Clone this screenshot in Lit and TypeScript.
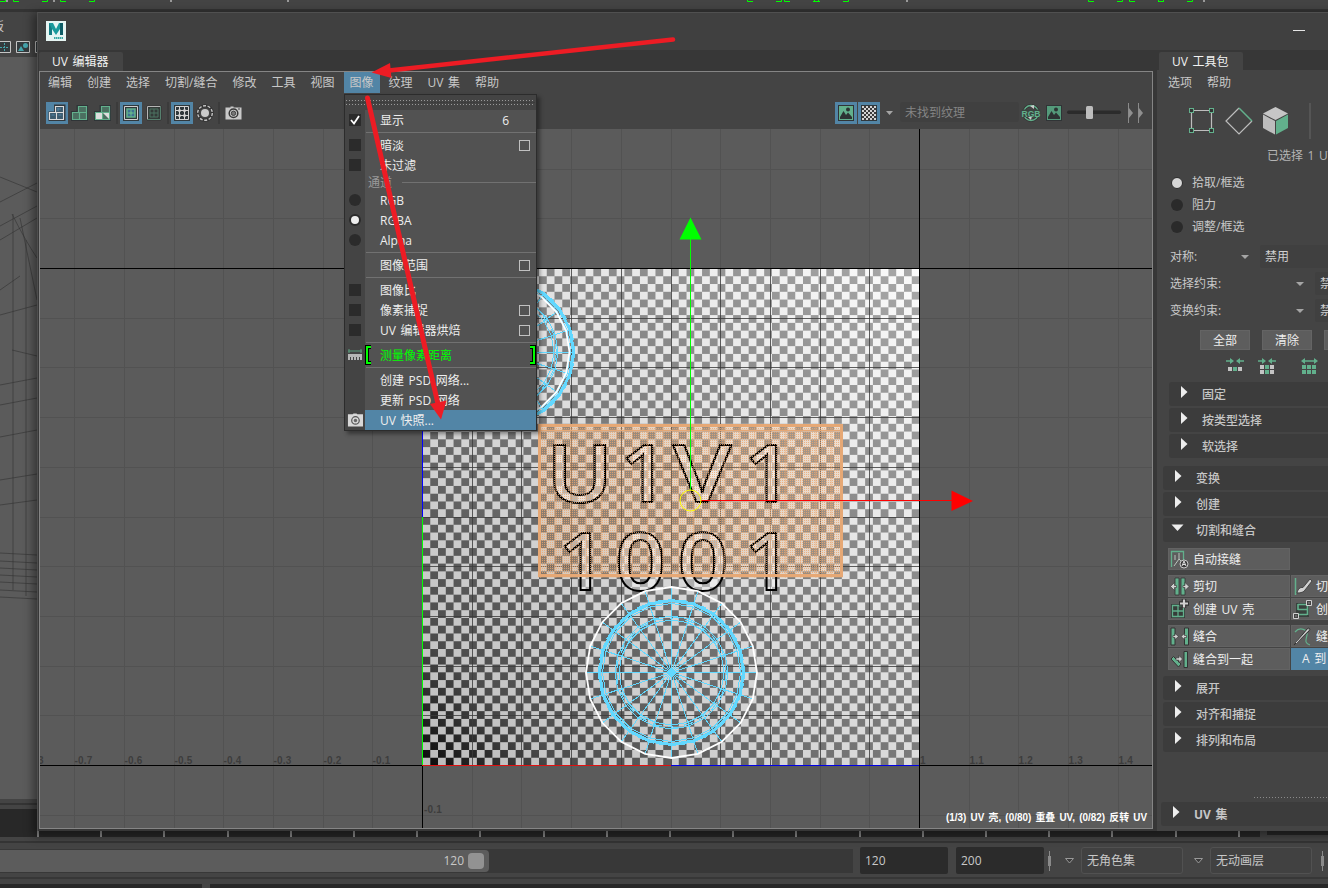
import { LitElement, html, svg, css, nothing } from "lit";
import { customElement } from "lit/decorators.js";
import { classMap } from "lit/directives/class-map.js";

const GREEN = "#62b08c";
const LIGHT = "#bdbdbd";

const polar = (cx: number, cy: number, r: number, i: number, n = 20) => {
  const a = (i / n) * Math.PI * 2;
  return [cx + r * Math.cos(a), cy + r * Math.sin(a)];
};
const ring = (cx: number, cy: number, r: number, n = 20) =>
  Array.from({ length: n }, (_, i) => polar(cx, cy, r, i, n).map((v) => v.toFixed(1)).join(",")).join(" ");

/** The 2D texture-space view: grid, checker texture, shells and manipulator. */
@customElement("uv-canvas")
export class UvCanvas extends LitElement {
  static styles = css`
    :host { display: block; width: 1112px; height: 699px; background: #5b5b5b; overflow: hidden; }
    svg { display: block; }
    .axis { font: bold 10px "Liberation Sans", Arial, sans-serif; fill: #3d3d3d; letter-spacing: 0.2px; }
    .status { font: bold 10px "Liberation Sans", "Noto Sans CJK SC", sans-serif; fill: #fff; }
    .glyph { font: 600 80px "Open Sans", "Noto Sans", sans-serif; }
  `;

  private gridLines(from: number, to: number) {
    return Array.from({ length: to - from + 1 }, (_, k) => from + k);
  }

  private wheel(cx: number, cy: number, whiteR: number) {
    return svg`
      <g fill="none" stroke="#62d8ff" shape-rendering="crispEdges">
        ${Array.from({ length: 20 }, (_, i) => {
          const [x, y] = polar(cx, cy, Math.max(whiteR, 72), i);
          return svg`<line x1=${cx} y1=${cy} x2=${x} y2=${y}></line>`;
        })}
        <polygon points=${ring(cx, cy, 72)} stroke-width="3"></polygon>
        <polygon points=${ring(cx, cy, 69)}></polygon>
        <polygon points=${ring(cx, cy, 73, 40)} stroke-dasharray="6 5"></polygon>
        <polygon points=${ring(cx, cy, 56.5)}></polygon>
        <polygon points=${ring(cx, cy, 55, 17)} stroke-dasharray="9 7"></polygon>
        <polygon points=${ring(cx, cy, 52.5)}></polygon>
        <circle cx=${cx} cy=${cy} r="3" fill="#62d8ff"></circle>
      </g>
      <polygon points=${ring(cx, cy, whiteR)} fill="none" stroke="#fff" stroke-width="1.8"></polygon>`;
  }

  private glyphs() {
    const g: [string, number, number, number][] = [
      ["U", 554, 502, 52], ["1", 625, 502, 25], ["V", 673, 502, 58], ["1", 749, 502, 25],
      ["1", 563, 589.5, 25], ["0", 619, 589.5, 43], ["0", 681.5, 589.5, 43], ["1", 749, 589.5, 25],
    ];
    const ink: Record<string, [number, number]> = { U: [6.6, 46.5], "1": [4.3, 24.2], V: [0, 49.5], "0": [3.6, 38.6] };
    return g.map(([c, x, y, w]) => {
      const s = w / ink[c][1];
      return svg`<text class="glyph" transform=${`translate(${x - ink[c][0] * s} ${y}) scale(${s} 1)`}>${c}</text>`;
    });
  }

  render() {
    const gx = (i: number) => Math.round(422 + i * 49.7) + 0.5;
    const gy = (i: number) => Math.round(765 - i * 49.7) + 0.5;
    return html`<svg width="1112" height="699" viewBox="40 129 1112 699">
      <defs>
        <linearGradient id="lg" x1="0" y1="1" x2="1" y2="0">
          <stop offset="0" stop-color="#bcbcbc"></stop><stop offset="1" stop-color="#fbfbfb"></stop>
        </linearGradient>
        <linearGradient id="dg" x1="0" y1="1" x2="1" y2="0">
          <stop offset="0" stop-color="#0a0a0a"></stop><stop offset=".14" stop-color="#4c4c4c"></stop>
          <stop offset=".42" stop-color="#727272"></stop><stop offset="1" stop-color="#a8a8a8"></stop>
        </linearGradient>
        <pattern id="chk" width="15.53125" height="15.53125" patternUnits="userSpaceOnUse" x="422.5" y="268.5">
          <path d="M0 0H7.766V7.766H0zM7.766 7.766H15.54V15.54H7.766z" fill="#fff" shape-rendering="crispEdges"></path>
        </pattern>
        <mask id="cm"><rect x="422" y="268" width="498" height="498" fill="url(#chk)"></rect></mask>
        <pattern id="dots" width="2" height="2" patternUnits="userSpaceOnUse">
          <rect width="1" height="1" fill="#eaa872"></rect>
        </pattern>
        <pattern id="cols" width="15.3" height="8" patternUnits="userSpaceOnUse" x="540">
          <rect width="1" height="8" fill="#e6a875"></rect>
        </pattern>
      </defs>
      <g stroke="#525252" shape-rendering="crispEdges">
        ${this.gridLines(-7, 14).map((i) => svg`<line x1=${gx(i)} x2=${gx(i)} y1="129" y2="828"></line>`)}
        ${this.gridLines(-1, 12).map((i) => svg`<line y1=${gy(i)} y2=${gy(i)} x1="40" x2="1152"></line>`)}
      </g>
      <rect x="422" y="268" width="497" height="497" fill="url(#lg)"></rect>
      <rect x="422" y="268" width="497" height="497" fill="url(#dg)" mask="url(#cm)"></rect>
      <g stroke="#3c3c3c" stroke-opacity=".82" shape-rendering="crispEdges">
        ${this.gridLines(1, 9).map((i) => svg`<line x1=${gx(i)} x2=${gx(i)} y1="268" y2="765"></line>
          <line y1=${gy(i)} y2=${gy(i)} x1="422" x2="919"></line>`)}
      </g>
      <g stroke="#000" shape-rendering="crispEdges">
        <path d="M40 268.5H1152M40 765.5H1152M422.5 129V828M919.5 129V828"></path>
        <path d="M422.5 268V517" stroke="#00f"></path><path d="M422.5 517V765" stroke="#0f0"></path>
        <path d="M422 765.5H671" stroke="#e01010"></path><path d="M671 765.5H919" stroke="#0000e6"></path>
      </g>
      ${[-7, -6, -5, -4, -3, -2, -1].map((i) => svg`<text class="axis" x=${gx(i)} y="764">${(i / 10).toFixed(1)}</text>`)}
      <text class="axis" x="38" y="764">3</text>
      <text class="axis" x="920" y="764">1</text>
      ${[11, 12, 13, 14].map((i) => svg`<text class="axis" x=${gx(i)} y="764">${(i / 10).toFixed(1)}</text>`)}
      <text class="axis" x="424" y="813">-0.1</text>

      ${this.wheel(501.5, 352, 68)}
      <rect x="538" y="424" width="305" height="154" fill="#f3b27a" fill-opacity=".24"></rect>
      <g fill="#fff" fill-opacity=".42" stroke="#000" stroke-width="2">${this.glyphs()}</g>
      <rect x="538" y="424" width="305" height="154" fill="url(#dots)" fill-opacity=".8" shape-rendering="crispEdges"></rect>
      <rect x="538" y="424" width="305" height="154" fill="url(#cols)" fill-opacity=".5" shape-rendering="crispEdges"></rect>
      <path d="M539.5 425.5H841.5V575.5H539.5z" fill="none" stroke="#e6a875" stroke-width="3"></path>
      <path d="M538 430.5H843M538 576H843" stroke="#e6a875" stroke-width="1.4" fill="none"></path>
      ${this.wheel(671.5, 672.5, 85.5)}

      <g shape-rendering="crispEdges">
        <path d="M690.5 238V490" stroke="#0f0"></path>
        <path d="M701 500.5H952" stroke="#f00"></path>
      </g>
      <path d="M690.5 217.5L701.5 239.5H679.5z" fill="#0f0"></path>
      <path d="M973 501L951.5 490.5V511z" fill="#f00"></path>
      <circle cx="690.5" cy="500.5" r="10.5" fill="none" stroke="#ff0"></circle>
      <text class="status" x="946" y="821" textLength="201" lengthAdjust="spacingAndGlyphs">(1/3) UV 壳, (0/80) 重叠 UV, (0/82) 反转 UV</text>
    </svg>`;
  }
}

const icon = (body: unknown, w = 22, h = 22) =>
  html`<svg class="ico" width=${w} height=${h} viewBox="0 0 ${w} ${h}">${body}</svg>`;

const shells = (stroke: string, fill: string) => svg`
  <path d="M9 4.500h8.500v13h-14v-7H9z" fill="none" stroke="#2f3437" stroke-width="3"></path>
  <g fill=${fill} stroke=${stroke} stroke-width="1.200">
    <path d="M9.500 4.500h8v6h-8zM3.500 10.500h7v7h-7zM10.500 10.500h7v7h-7z"></path>
  </g>`;
const camera = svg`
  <path d="M3.500 5.500h5v-1h3v1h8v12h-16z" fill="#c9c9c9"></path><path d="M16 7h2" stroke="#444"></path>
  <circle cx="11.500" cy="11.300" r="4.300" fill="#c9c9c9" stroke="#383838" stroke-width="1.500"></circle>
  <circle cx="11.500" cy="11.300" r="2.200" fill="#777" stroke="#444"></circle>`;
const picture = (bg: string) => svg`
  <path d="M3 3h16v16H3z" fill="#303436"></path><path d="M4 4h14v14H4z" fill=${bg}></path>
  <path d="M5 17v-2l3.500-6 2.500 4 2-2.500 4 4.500v2z" fill="#2d3333"></path><circle cx="13" cy="7.500" r="2" fill="#2d3333"></circle>`;

const toolIcons = {
  wire: icon(svg`<path d="M8 2.500h11.500v16.500H2.500V9.500H8z" fill="#32393e"></path><g fill="#3d5b6e" stroke="#dcdcdc" stroke-width="1.100"><path d="M9.500 4.500h8v6h-8zM3.500 10.500h7v7h-7zM10.500 10.500h7v7h-7z"></path><path d="M12 7h3M12 6v3M5.500 13h3M12.500 13h3" stroke="#5285a6"></path></g>`),
  shade: icon(shells(GREEN, "#4b6f60")),
  distort: icon(svg`${shells(GREEN, "#4b6f60")}<path d="M4 11h6v6H4z" fill="#ddd"></path><path d="M11 11h6v6z" fill="#ddd"></path>`),
  border: icon(svg`<path d="M3 3h16v16H3z" fill="#30383c"></path><path d="M4.500 4.500h13v13h-13z" fill="none" stroke="#d0d0d0"></path><path d="M7 7h8v8H7z" fill="#3f7194" stroke=${GREEN} stroke-width="1.600"></path><path d="M11 7v8M7 11h8" stroke=${GREEN}></path><circle cx="11" cy="11" r="1.600" fill=${GREEN}></circle>`),
  texborder: icon(svg`<path d="M4 4h14v14H4z" fill="#343a38" stroke="#303030"></path><path d="M4.500 17.500v-13h13" stroke="#b5b5b5" fill="none"></path><path d="M4.500 17.500h13v-13" stroke="#56806e" fill="none"></path><path d="M7 7h8v8H7zM11 7v8M7 11h8" stroke="#4c7562" fill="none"></path>`),
  grid: icon(svg`<path d="M3 3h16v16H3z" fill="#30383c"></path><path d="M4.500 4.500h13v13h-13zM8.500 4v14M13.500 4v14M4 8.500h14M4 13.500h14" stroke="#d5d5d5" fill="none"></path>${[8.5, 13.5].map((x) => [8.5, 13.5].map((y) => svg`<circle cx=${x} cy=${y} r="1.500" fill="#d5d5d5"></circle>`))}`),
  iso: icon(svg`<circle cx="11" cy="11" r="7.300" fill="none" stroke="#333" stroke-width="3"></circle><circle cx="11" cy="11" r="7.300" fill="none" stroke="#c4c4c4" stroke-width="1.400" stroke-dasharray="3 1.600"></circle><circle cx="11" cy="11" r="4" fill="#cbcbcb"></circle>`),
  camera: icon(camera),
  image: icon(picture("#62b08c")),
  checker: icon(svg`<path d="M3 3h16v16H3z" fill="#30383c"></path><path d="M4 4h14v14H4z" fill="#d4d4d4"></path>${Array.from({ length: 49 }, (_, k) => (k % 2 ? svg`<rect x=${4 + (k % 7) * 2} y=${4 + Math.floor(k / 7) * 2} width="2" height="2" fill="#3b3b3b"></rect>` : nothing))}`),
  rgb: icon(svg`<circle cx="11" cy="11" r="7.500" fill="none" stroke="#333" stroke-width="3"></circle><circle cx="11" cy="11" r="7.500" fill="none" stroke=${GREEN} stroke-width="1.300"></circle><path d="M10 4l4-1v4zM11 18l-3-3 4-1z" fill="#ccc"></path><path d="M1.500 7.500h19v7.500h-19z" fill="#3a4441"></path><text x="1.500" y="14.500" textLength="19" lengthAdjust="spacingAndGlyphs" font-family="Liberation Sans" font-weight="bold" font-size="9" fill=${GREEN}>RGB</text>`),
  dim: icon(picture("#549a7a")),
};

const kitIcons: Record<string, unknown> = {
  auto: svg`<path d="M2.500 18V2.500h12V11M6 6v5M10 4v6l-5 7M10 10l3 3" fill="none" stroke="#b8c4bd"></path><path d="M2.500 18V2.500h12V11" fill="none" stroke=${GREEN} stroke-width="1.300"></path><circle cx="15" cy="15" r="4" fill="#3a3a3a" stroke="#c8c8c8"></circle><path d="M13 17l2-5 2 5M14 15.500h2" stroke="#ddd" fill="none"></path>`,
  cut: svg`<path d="M6 2h4v17H6zM12 2h4v17h-4z" fill=${GREEN} stroke="#333" stroke-width=".800"></path><path d="M1.500 10.500l4-4v3h2v2h-2v3zM20 10.500l-4-4v3h-2v2h2v3z" fill="#d0d0d0" stroke="#333" stroke-width=".600"></path>`,
  create: svg`<path d="M2 5h14v14H2z" fill="#363c39"></path><path d="M3.500 6.500h11v11h-11zM9 6v12M3 12h12" stroke=${GREEN} fill="none" stroke-width="1.300"></path><path d="M15 0v9M10 4.500h10" stroke="#333" stroke-width="4.500"></path><path d="M15 .500v8M11 4.500h8" stroke="#d0d0d0" stroke-width="2.200"></path>`,
  sew: svg`<path d="M2 2h4v17H2zM15.500 2h4v17h-4z" fill=${GREEN} stroke="#333"></path><path d="M9.500 10.500l-3.500-3v2H4v2h2v2zM12 10.500l3.500-3v2h2v2h-2v2z" fill="#d0d0d0" stroke="#333" stroke-width=".600"></path>`,
  move: svg`<path d="M15 2.500h3.500v16H15z" fill=${GREEN} stroke="#333"></path><path d="M2 10l2.500-2.500L12 15l-2.500 3z" fill=${GREEN} stroke="#333"></path><path d="M13.500 10l-3.500-3.500v2.300H7v2.400h3v2.300z" fill="#d0d0d0" stroke="#333" stroke-width=".600"></path>`,
  knife: svg`<path d="M3.500 2v17" stroke=${GREEN} stroke-width="1.500"></path><path d="M5 17c1-4 3-6 6-5.500L18 3l2 2-7 9c-1 2-4 3-8 3z" fill="#d0d0d0" stroke="#333" stroke-width=".800"></path>`,
  strip: svg`<path d="M4 4h13v14H4z" fill="#39413d"></path><path d="M6 5.500h10M6 10.500h10M5 15.500h10M6 5v6M15.500 5v11" stroke=${GREEN} stroke-width="1.600" fill="none"></path><path d="M14.500 1.500h5v5h-5zM1.500 14.500h5v5h-5z" fill="#444" stroke="#d0d0d0"></path><path d="M16.500 3.500h1v1h-1zM3.500 16.500h1v1h-1z" fill="#ddd"></path>`,
  needle: svg`<path d="M3 6c5-6 13-2 12 3s-3 8 3 10" stroke=${GREEN} fill="none" stroke-width="1.200"></path><path d="M2 19L15 3c2-2 4 0 2 2z" fill="#aaa" stroke="#333"></path><path d="M4 17L16 4" stroke="#ddd"></path>`,
};

interface MenuRow { t: string; kind?: string; mark?: string; opt?: boolean; key?: string; }
const MENU: MenuRow[] = [
  { t: "显示", mark: "check on", key: "6" }, { t: "", kind: "sep" },
  { t: "暗淡", mark: "check", opt: true }, { t: "未过滤", mark: "check" }, { t: "通道", kind: "head" },
  { t: "RGB", mark: "radio" }, { t: "RGBA", mark: "radio on" }, { t: "Alpha", mark: "radio" }, { t: "", kind: "sep" },
  { t: "图像范围", opt: true }, { t: "", kind: "sep" },
  { t: "图像比", mark: "check" }, { t: "像素捕捉", mark: "check", opt: true }, { t: "UV 编辑器烘焙", mark: "check", opt: true },
  { t: "", kind: "sep" }, { t: "测量像素距离", kind: "fresh", mark: "ruler" }, { t: "", kind: "sep" },
  { t: "创建 PSD 网络..." }, { t: "更新 PSD 网络" }, { t: "UV 快照...", kind: "hot", mark: "cam" },
];

@customElement("app-root")
export class AppRoot extends LitElement {
  static styles = css`
    :host { display: block; position: relative; width: 1328px; height: 888px; overflow: hidden; background: #444;
      font: 12px/20px "Open Sans", "Noto Sans CJK SC", sans-serif; color: #c8c8c8; word-spacing: 1.5px; }
    * { box-sizing: border-box; }
    svg { display: block; flex: none; }
    .row { display: flex; align-items: center; white-space: nowrap; }

    .main { display: flex; flex-direction: column; height: 888px; }
    .left { width: 37px; height: 787px; background: #5b5b5b; }
    .rule { height: 10px; background: linear-gradient(#444 0 4px, #343434 4px 6px, #444 6px); flex: none; }
    .range { height: 31px; gap: 8px; align-items: center; flex: none; margin-top: -2px; }
    .track { width: 853px; height: 24px; background: #383838; margin-right: -1px; }
    .thumb { width: 489px; height: 22px; background: #5c5c5c; border-radius: 0 4px 4px 0; justify-content: flex-end; padding-right: 5px; gap: 4px; }
    .grip { width: 16px; height: 16px; border-radius: 4px; background: #929292; }
    .num { width: 88px; height: 27px; background: #2b2b2b; border-radius: 2px; padding: 4px 5px 2px; }
    .split { width: 3px; height: 20px; background: linear-gradient(90deg, transparent 1px, #8a8a8a 1px 2px, transparent 2px), linear-gradient(transparent 5px, #8a8a8a 5px 15px, transparent 15px); margin-left: -4px; }
    .split.end { margin-left: -7px; }
    .drop { margin: 0 -2px 0 6px; }
    .drop.two { margin-left: 2px; }
    .combo { width: 102px; height: 27px; border: 1px solid #515151; border-radius: 3px; padding: 3px 5px; background: #414141; flex: none; }
    .foot { height: 4px; display: flex; gap: 8px; margin-top: auto; }
    .foot i { background: #282828; flex: 1; } .foot i:first-child { flex: none; width: 202px; }

    .window { position: absolute; left: 37px; top: 12px; width: 1300px; height: 819px; background: #444;
      border-left: 1px solid #4d4d4d; border-top: 1px solid #505050; box-shadow: -2px 3px 9px 2px rgba(0,0,0,.42); display: flex; flex-direction: column; }
    .title { height: 37px; background: #404040; padding: 0 23px 2px 8px; justify-content: space-between; flex: none; width: 1290px; }
    .min { width: 12px; height: 1px; background: #e6e6e6; }
    .body { display: flex; height: 781px; background: #373737; }
    .editor { width: 1115px; padding: 2px 0 0 1px; background: #373737; flex: none; }
    .tab { width: 84px; height: 19px; background: #444; border-radius: 2px 2px 0 0; padding-left: 13px; color: #f2f2f2; line-height: 19px; }
    .frame { width: 1114px; height: 758px; border: 1px solid #858585; background: #444; }
    .menubar { height: 30px; gap: 3px; padding: 0 2px; align-items: flex-start; }
    .menubar span { padding: 0 6px; height: 21px; line-height: 22px; }
    .menubar .hot { background: #5285a6; }
    .tools { height: 27px; gap: 1px; padding: 0 6px; align-items: flex-start; }
    .b { width: 22px; height: 22px; } .b.on { background: #5285a6; }
    .bar { width: 2px; height: 22px; background: #3b3b3b; margin: 0 1px; }
    .grow { flex: 1; }
    .dd { width: 0; height: 0; border: 4px solid transparent; border-top: 4.5px solid #a5a5a5; border-bottom: 0; }
    .search { width: 119px; height: 20px; border-radius: 3px; background: #404040; color: #858585; padding-left: 5px; line-height: 22px; }

    .kit { flex: 1; margin-left: 4px; background: #444; border-top: 2px solid #373737; overflow: hidden; width: 180px; }
    .kit .head { background: #373737; height: 18px; padding-left: 2px; display: flex; }
    .kit .tab { height: 18px; line-height: 19px; }
    .kmenu { height: 24px; padding: 2px 0 0 11px; gap: 15px; }
    .modes { height: 53px; padding: 1px 0 0 31px; gap: 10px; }
    .sel { height: 17px; padding-left: 110px; color: #b4b4b4; }
    .radios { padding: 3px 0 0 14px; margin-top: 5px; }
    .radios .row { height: 22px; gap: 9px; }
    .dot { width: 12px; height: 12px; border-radius: 50%; background: #2a2a2a; flex: none; margin-top: -1px; }
    .dot.on { background: #d6d6d6; border: 1.500px solid #2a2a2a; }
    .form { padding: 5px 0 0 13px; }
    .form .row { height: 27px; flex: none; }
    .form .field { height: 23px; background: #404040; border-radius: 2px; flex: 1; padding: 2px 5px; color: #d0d0d0; }
    .acts { padding: 6px 0 0 43px; gap: 12px; }
    .btn { width: 50px; height: 20px; background: #5d5d5d; border: 1px solid #646464; text-align: center; color: #eee; flex: none; line-height: 20px; }
    .grow-icons { height: 32px; padding: 2px 0 0 68px; gap: 12px; }
    .sec { height: 24px; background: #3c3c3c; border-radius: 3px 0 0 3px; margin: 0 0 2px 6px; padding-left: 12px; gap: 9px; color: #c6c6c6; font-weight: 500; }
    .sec.in { margin-left: 12px; }
    .sec svg { margin-top: -5px; overflow: visible; }
    .sec span { padding-top: 2px; }
    .sec.last { margin: 4px 0 0 4px; font-weight: 700; }
    .tools2 { display: grid; grid-template-columns: 122px 122px; column-gap: 1px; row-gap: 1px; margin-left: 11px; }
    .kb { height: 22px; background: #5d5d5d; border: 1px solid #636363; color: #eee; gap: 3px; }
    .kb span { padding-top: 2px; }
    .kb.blue { background: #5285a6; border-color: #5285a6; padding-left: 10px; }

    .menu { position: absolute; left: 344px; top: 94px; width: 193px; height: 337px; background: #525252; border: 1px solid #2c2c2c;
      box-shadow: 3px 3px 4px rgba(0,0,0,.4); color: #eee; }
    .tear { height: 15px; background: #444; display: flex; align-items: center; }
    .mi { display: grid; grid-template-columns: 20px 1fr; grid-template-rows: 100%; height: 20px; }
    .mi .gut { background: #444; display: grid; place-items: center; }
    .mi .lab { display: flex; align-items: center; padding: 0 6px 0 15px; white-space: nowrap; justify-content: space-between; }
    .mi .lab span { padding-top: 2px; line-height: 18px; }
    .mi.sep { height: 5px; } .mi.head { height: 15px; color: #9a9a9a; }
    .mi.sep .lab { padding: 0 0 0 1px; }
    .mi.head .lab { padding: 0 0 0 3px; }
    .mi.head .lab span { padding: 0; line-height: 15px; }
    .line { height: 1px; background: #717171; flex: 1; } .mi.head .line { margin-left: 10px; }
    .mi.hot .lab { background: #5285a6; }
    .mi.fresh .lab { color: #0f0; padding: 0; }
    .mi.fresh .name { padding-left: 9px; }
    .box { width: 12px; height: 12px; background: #2b2b2b; } .round { width: 12px; height: 12px; border-radius: 50%; background: #2b2b2b; }
    .round.on { background: #eee; border: 2px solid #2b2b2b; }
    .opt { width: 11px; height: 11px; border: 1px solid #c0c0c0; } .key { margin-right: 21px; }
    .marks { position: absolute; left: 0; top: 0; }
  `;

  private tri(down = false) {
    return html`<svg width="12" height="12" viewBox="0 0 12 12"><path d=${down ? "M-3.500 2.500h12L2.500 9z" : "M0 0v12l6.500-6z"} fill="#eee"></path></svg>`;
  }
  private section(t: string, cls = "", down = false) {
    return html`<div class="row sec ${cls}">${this.tri(down)}<span>${t}</span></div>`;
  }
  private btn(name: keyof typeof toolIcons, on = false) {
    return html`<div class=${classMap({ b: true, on })}>${toolIcons[name]}</div>`;
  }
  private kb(name: string, t: string) {
    return html`<div class="row kb">${icon(kitIcons[name], 21, 20)}<span>${t}</span></div>`;
  }
  private mark(m?: string) {
    switch (m) {
      case "check": return html`<div class="box"></div>`;
      case "check on": return html`<div class="box"><svg width="12" height="12" viewBox="0 0 12 12"><path d="M2 6l3 3.500L10 2" fill="none" stroke="#fff" stroke-width="1.800"></path></svg></div>`;
      case "radio": return html`<div class="round"></div>`;
      case "radio on": return html`<div class="round on"></div>`;
      case "ruler": return icon(svg`<path d="M1 4h14M2 2v4M14 2v4" stroke="#5a9c7d"></path><path d="M1 7h14v6H1z" fill="#b5b5b5"></path><path d="M3.500 10v3M6.500 10v3M9.500 10v3M12.500 10v3" stroke="#444"></path>`, 16, 16);
      case "cam": return html`<svg width="16" height="16" viewBox="3 3 17 16"><path d="M4 5h5l1-1h3l1 1h6v13H4z" fill="#d8d8d8"></path><circle cx="12" cy="11.500" r="4" fill="#d8d8d8" stroke="#555" stroke-width="1.300"></circle><circle cx="12" cy="11.500" r="1.800" fill="#666"></circle></svg>`;
      default: return nothing;
    }
  }
  private menuRow(m: MenuRow) {
    const line = m.kind === "sep" || m.kind === "head";
    const br = (d: string) => html`<svg width="6" height="20" viewBox="0 0 6 20"><path d=${d} stroke="#000" stroke-width="4" fill="none"></path><path d=${d} stroke="#0f0" stroke-width="2" fill="none"></path></svg>`;
    return html`<div class="mi ${m.kind ?? ""}">
      <div class="gut">${this.mark(m.mark)}</div>
      <div class="lab">${m.kind === "fresh"
        ? html`<div class="row">${br("M6 2H2V18H6")}<span class="name">${m.t}</span></div>${br("M0 2H4V18H0")}`
        : html`${m.t ? html`<span>${m.t}</span>` : nothing}${line ? html`<i class="line"></i>` : nothing}
          ${m.opt ? html`<i class="opt"></i>` : nothing}${m.key ? html`<span class="key">${m.key}</span>` : nothing}`}</div>
    </div>`;
  }

  render() {
    const brackets = [-29, 13, 60, 747, 784, 814, 1088, 1129, 1158];
    return html`
      <div class="main">
        <svg width="1328" height="12"><rect y="9" width="1328" height="3" fill="#333"></rect>
          ${brackets.map((x) => svg`<path d="M${x + 0.5} 0v1.500h5.500M${x + 29} 1.500h5.500v-1.500" stroke="#0f0" fill="none"></path>`)}
          ${[6, 53, 170, 287, 906, 1203].map((x) => svg`<rect x=${x} width="2" height="2" fill="#999"></rect>`)}</svg>
        <div class="left"><svg width="37" height="787" viewBox="0 12 37 787">
          <rect y="12" width="37" height="45" fill="#444"></rect>
          <text x="-8" y="31" font-size="12" font-family="Noto Sans CJK SC" fill="#c8c8c8">板</text>
          <g fill="#343b3e" stroke="#c5c5c5"><path d="M-3.500 41.500h14v11h-14zM16.500 41.500h13v11h-13zM35.500 41.500h13v11h-13z"></path></g>
          <path d="M0 47.500h9M4.500 43v9" stroke="#45a5ad" stroke-dasharray="2 1"></path>
          <path d="M18 51l3-5 3 5z" fill="#45a5ad"></path><circle cx="25.500" cy="45.500" r="2.500" fill="#45a5ad"></circle>
          <g stroke="#333" stroke-opacity=".75" stroke-width=".8" fill="none">
            <path d="M0 177L37 192M0 202L37 183M0 226L37 206M0 240L37 218M12 214Q25 240 37 258M13 214V590M20 218L37 300M0 290L20 276M0 315L37 305M12 350L37 356M0 385L37 378M0 405L37 398M0 437L37 430M0 480L37 474M0 505L37 500M0 553L37 555M0 561L37 563M0 568L37 570M0 575L37 577M0 582L37 584M0 590L37 592M0 597L37 599M26 240V596"></path>
          </g></svg></div>
        <div class="rule"></div>
        <svg width="1328" height="28"><rect width="1260" height="28" fill="#282828"></rect><rect x="1267" width="61" height="26" fill="#282828"></rect>
          ${Array.from({ length: 20 }, (_, i) => svg`<rect x=${Math.round(37 + i * 63.2)} y="20" width="2" height="8" fill="#8a8a8a"></rect>`)}</svg>
        <div class="rule"></div>
        <div class="row range">
          <div class="row track"><div class="row thumb"><span>120</span><i class="grip"></i></div></div>
          <div class="num">120</div><div class="num">200</div>
          <i class="split"></i>
          <svg class="drop" width="10" height="8" viewBox="0 0 10 8"><path d="M.500 1.500h8L4.500 6z" fill="#3a3a3a" stroke="#999"></path></svg>
          <div class="combo">无角色集</div>
          <svg class="drop two" width="11" height="8" viewBox="-1 0 11 8"><path d="M.500 1.500h8L4.500 6z" fill="#3a3a3a" stroke="#999"></path></svg>
          <div class="combo">无动画层</div><i></i><i class="split end"></i>
        </div>
        <svg width="1328" height="3"><rect y="1" width="1328" height="2" fill="#373737"></rect></svg>
        <div class="foot"><i></i><i></i></div>
      </div>

      <div class="window">
        <div class="row title">
          <svg width="20" height="20" viewBox="0 0 20 20"><rect width="20" height="20" fill="#e6f5f3"></rect><path d="M3 2h3v12H3z" fill="#157b82"></path><path d="M3 2h4l3 6 3-6h4v12h-3V8l-4 6-4-6z" fill="#1a9a9c"></path><path d="M14 2h3v12h-3z" fill="#0d5d66"></path><path d="M8 17h9" stroke="#3aa9a5" stroke-width="2" stroke-dasharray="1.500 .500"></path></svg>
          <i class="min"></i>
        </div>
        <div class="body">
          <div class="editor">
            <div class="tab">UV 编辑器</div>
            <div class="frame">
              <div class="row menubar">
                ${["编辑", "创建", "选择", "切割/缝合", "修改", "工具", "视图", "图像", "纹理", "UV 集", "帮助"].map((t) => html`<span class=${classMap({ hot: t === "图像" })}>${t}</span>`)}
              </div>
              <div class="row tools">
                ${this.btn("wire", true)}${this.btn("shade")}${this.btn("distort")}<i class="bar"></i>
                ${this.btn("border", true)}${this.btn("texborder")}<i class="bar"></i>
                ${this.btn("grid", true)}${this.btn("iso")}<i class="bar"></i>${this.btn("camera")}
                <i class="grow"></i>
                ${this.btn("image", true)}${this.btn("checker", true)}
                <svg width="18" height="22"><path d="M5 9h7l-3.500 4z" fill="#a5a5a5"></path></svg>
                <div class="search">未找到纹理</div>
                ${this.btn("rgb")}${this.btn("dim")}
                <svg width="80" height="22" viewBox="-1 0 80 22"><rect x="0" y="8.500" width="54" height="3.500" rx="1.700" fill="#2b2b2b"></rect><rect x="19" y="4" width="7" height="13" rx="1.500" fill="#bdbdbd"></rect>
                  <path d="M61.500 1v20M71.500 1v20" stroke="#8a8a8a"></path><path d="M62 6l4 5-4 5zM72 6l4 5-4 5z" fill="#8f8f8f"></path></svg>
              </div>
              <uv-canvas></uv-canvas>
            </div>
          </div>
          <div class="kit">
            <div class="head"><div class="tab">UV 工具包</div></div>
            <div class="row kmenu"><span>选项</span><span>帮助</span></div>
            <div class="row modes">
              <svg width="27" height="30" viewBox="0 0 27 30"><path d="M3.500 4.500h20v20h-20z" fill="none" stroke=${LIGHT} stroke-width="1.200"></path><g fill="#333" stroke=${GREEN}>${[[1, 2], [21, 2], [1, 22], [21, 22]].map(([x, y]) => svg`<rect x=${x + 0.5} y=${y + 0.5} width="4" height="4"></rect>`)}</g></svg>
              <svg width="28" height="30" viewBox="0 0 28 30"><path d="M14 2L1 15l13 13 13-13" fill="none" stroke=${LIGHT} stroke-width="1.200"></path><path d="M14 2l13 13" stroke=${GREEN} stroke-width="1.500"></path></svg>
              <svg width="26" height="30" viewBox="1 0 26 30"><path d="M13.500 1L26 7.500 13.500 14 1 7.500z" fill="#c6c6c6"></path><path d="M1 8.500l12 6.500v13.500L1 22z" fill="#bdbdbd"></path><path d="M26 8.500L14 15v13.500L26 22z" fill=${GREEN}></path></svg>
              <svg width="12" height="36"><path d="M11 0v36" stroke="#555" stroke-width="2"></path></svg>
            </div>
            <div class="row sel">已选择 1 UV</div>
            <div class="radios">
              ${["拾取/框选", "阻力", "调整/框选"].map((t, i) => html`<div class="row"><i class=${classMap({ dot: true, on: i === 0 })}></i>${t}</div>`)}
            </div>
            <div class="form">
              ${[["对称:", "禁用", 90], ["选择约束:", "禁用", 145], ["变换约束:", "禁用", 145]].map(([l, v, w]) => html`
                <div class="row"><div class="row" style="width:${w}px"><span>${l}</span><i class="grow"></i><i class="dd"></i><svg width="11" height="1"></svg></div><div class="field">${v}</div></div>`)}
            </div>
            <div class="row acts"><div class="btn">全部</div><div class="btn">清除</div><div class="btn"></div></div>
            <div class="row grow-icons">
              <svg width="20" height="20" viewBox="0 0 20 20"><path d="M1 4h5M14 4h5" stroke=${GREEN} stroke-width="1.500"></path><path d="M5 1l4 3-4 3zM15 1l-4 3 4 3z" fill=${GREEN}></path><path d="M3 10h4v4H3zM13 10h4v4h-4z" fill="#c4c4c4"></path><path d="M8 10h4v4H8z" fill=${GREEN}></path></svg>
              <svg width="20" height="20" viewBox="0 0 20 20"><path d="M1 4h5M14 4h5" stroke=${GREEN} stroke-width="1.500"></path><path d="M5 1l4 3-4 3zM15 1l-4 3 4 3z" fill=${GREEN}></path><path d="M3 8h4v4H3zM13 8h4v4h-4zM3 13h4v4H3zM13 13h4v4h-4z" fill="#c4c4c4"></path><path d="M8 8h4v4H8zM8 13h4v4H8z" fill=${GREEN}></path></svg>
              <svg width="31" height="20" viewBox="-11 0 31 20"><path d="M3 4h13" stroke=${GREEN} stroke-width="1.500"></path><path d="M5 1L1 4l4 3zM14 1l4 3-4 3z" fill=${GREEN}></path><path d="M2 8h4v4H2zM7 8h4v4H7zM12 8h4v4h-4zM2 13h4v4H2zM7 13h4v4H7zM12 13h4v4h-4z" fill=${GREEN}></path></svg>
            </div>
            ${this.section("固定", "in")}${this.section("按类型选择", "in")}${this.section("软选择", "in")}
            <svg width="1" height="6"></svg>
            ${this.section("变换")}${this.section("创建")}${this.section("切割和缝合", "", true)}
            <svg width="1" height="4"></svg>
            <div class="tools2">${this.kb("auto", "自动接缝")}</div>
            <svg width="1" height="5"></svg>
            <div class="tools2">${this.kb("cut", "剪切")}${this.kb("knife", "切割工具")}${this.kb("create", "创建 UV 壳")}${this.kb("strip", "创建壳")}</div>
            <svg width="1" height="5"></svg>
            <div class="tools2">${this.kb("sew", "缝合")}${this.kb("needle", "缝合工具")}${this.kb("move", "缝合到一起")}<div class="row kb blue">A 到 B</div></div>
            <svg width="1" height="6"></svg>
            ${this.section("展开")}${this.section("对齐和捕捉")}${this.section("排列和布局")}
            <svg width="180" height="44"><path d="M97 43.500H180" stroke="#8a8a8a" stroke-dasharray="1 2"></path></svg>
            ${this.section("UV 集", "last")}
          </div>
        </div>
      </div>

      <div class="menu">
        <div class="tear"><svg width="191" height="5"><path d="M1 .500H190M1 4.500H190" stroke="#999" stroke-dasharray="1 2"></path><path d="M2.500 2.500H190" stroke="#333" stroke-dasharray="1 2"></path></svg></div>
        ${MENU.map((m) => this.menuRow(m))}
      </div>
      <svg class="marks" width="1328" height="888" viewBox="0 0 1328 888">
        <g stroke="#ed1c24" fill="#ed1c24">
          <path d="M389 70.500L673 39.500" stroke-width="4.500" stroke-linecap="round"></path><path d="M371.500 72.500L390 63L391.500 78z" stroke="none"></path>
          <path d="M367.500 98L438 404" stroke-width="5" stroke-linecap="round"></path><path d="M441 419.500L430 404L446.500 400.500z" stroke="none"></path>
        </g>
      </svg>`;
  }
}
